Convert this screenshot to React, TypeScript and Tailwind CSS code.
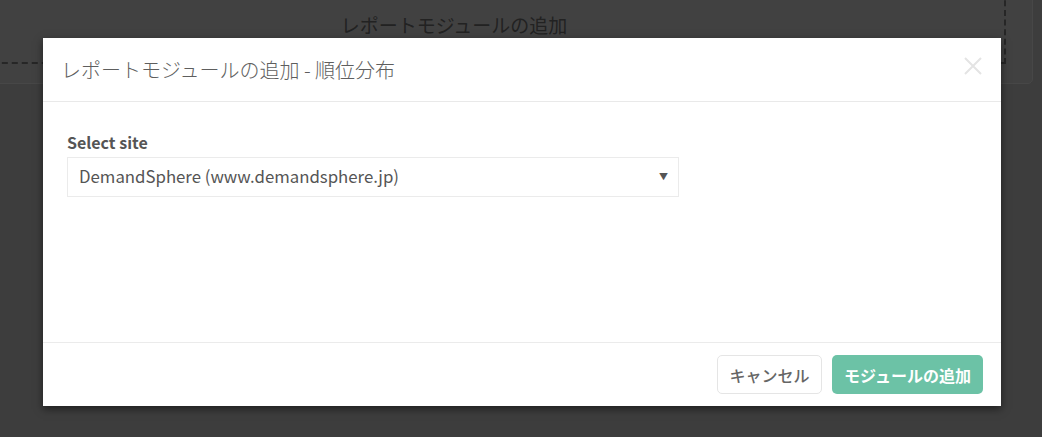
export default function App() {
  const font = { fontFamily: '"Noto Sans CJK JP", "Noto Sans", sans-serif' };
  return (
    <div className="relative h-[437px] w-full overflow-hidden bg-[#3d3d3d]" style={font}>
      {/* page behind the backdrop */}
      <div className="-ml-[125px] -mt-[40px] w-[1158px] rounded-[5px] border border-[#474747] bg-[#414141] px-[26px] pb-[19px] pt-[20px]">
        <div className="flex h-[83px] items-end justify-center border-2 border-dashed border-[#262626] pb-[28px]">
          <span className="text-[19px] leading-none text-[#222]">レポートモジュールの追加</span>
        </div>
      </div>

      {/* modal */}
      <div className="absolute left-[43px] top-[38px] flex h-[368px] w-[958px] flex-col bg-white shadow-[0_3px_8px_rgba(0,0,0,0.5)]">
        <div className="flex h-[64px] items-center justify-between border-b border-[#e9e9e9] pl-[18px] pr-[18px]">
          <h4 className="text-[20px] font-light text-[#5e5e5e]">レポートモジュールの追加 - 順位分布</h4>
          <svg width="20" height="20" viewBox="0 0 20 20" className="-mt-[8px]">
            <path d="M2 2L18 18M18 2L2 18" stroke="#e4e4e4" strokeWidth="2" />
          </svg>
        </div>
        <div className="flex-1 px-[24px] pt-[28px]">
          <div className="text-[16px] font-bold leading-[24px] text-[#555]">Select site</div>
          <div className="mt-[3px] flex h-[40px] w-[612px] items-center justify-between border border-[#ebebeb] pl-[11px] pr-[10px]">
            <span className="text-[16.8px] text-[#555]">DemandSphere (www.demandsphere.jp)</span>
            <span className="text-[9px] text-[#555]">▼</span>
          </div>
        </div>
        <div className="flex h-[64px] items-start justify-end gap-[10px] border-t border-[#ebebeb] pr-[18px] pt-[12px]">
          <button className="h-[39px] w-[105px] rounded-[5px] border border-[#e5e5e5] bg-white text-[16px] font-medium text-[#666]">
            キャンセル
          </button>
          <button className="h-[39px] w-[151px] rounded-[5px] bg-[#6cc2a6] text-[16px] font-bold text-white">
            モジュールの追加
          </button>
        </div>
      </div>
    </div>
  );
}
